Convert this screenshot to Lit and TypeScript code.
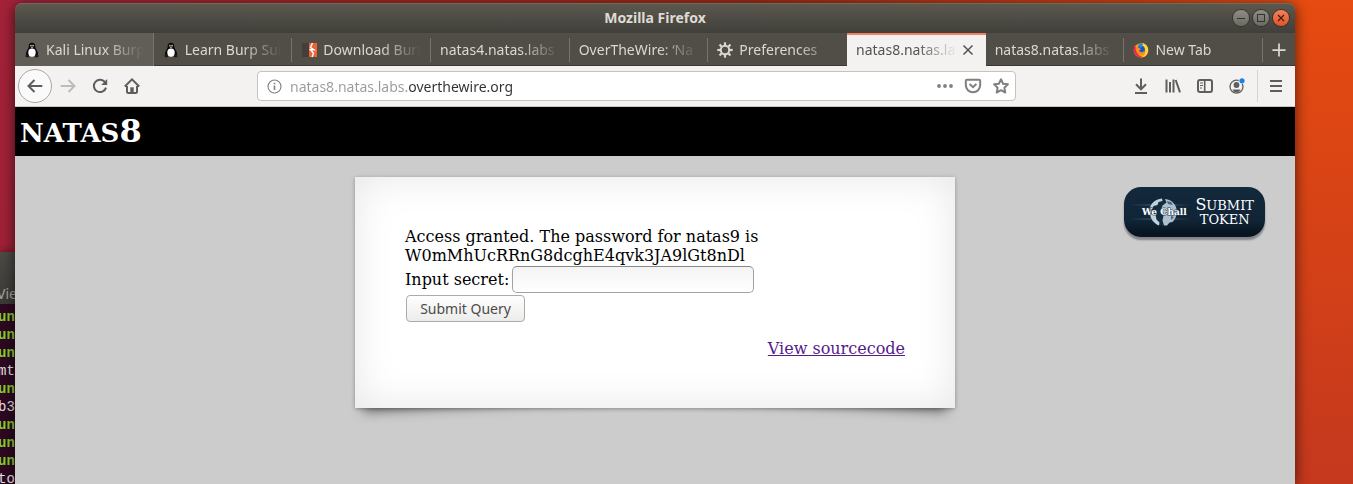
import { LitElement, html, css, svg, nothing, TemplateResult } from "lit";
import { customElement, property, state } from "lit/decorators.js";

type Tab = { title: string; icon?: "tux" | "burp" | "gear" | "fox"; hover?: boolean };

const TABS: Tab[] = [
  { title: "Kali Linux Burp", icon: "tux", hover: true },
  { title: "Learn Burp Suite", icon: "tux" },
  { title: "Download Burp", icon: "burp" },
  { title: "natas4.natas.labs" },
  { title: "OverTheWire: ‘Na" },
  { title: "Preferences", icon: "gear" },
  { title: "natas8.natas.labs" },
  { title: "natas8.natas.labs" },
  { title: "New Tab", icon: "fox" },
];

const spokes = [0, 45, 90, 135, 180, 225, 270, 315];

const ICONS: Record<string, TemplateResult> = {
  tux: svg`
    <path d="M8 .8C5.700.8 4.600 2.300 4.700 4.300c.1 1.700-.6 2.400-1.700 4.200C2 10.200 1.600 12 2.300 13.600h11.400c.7-1.600.3-3.400-.7-5.100-1.100-1.800-1.800-2.500-1.700-4.200C11.400 2.300 10.300.8 8 .8z" fill="#0b0b0b"/>
    <ellipse cx="8" cy="10.600" rx="3.700" ry="4.200" fill="#fff"/>
    <ellipse cx="6.900" cy="3.600" rx=".7" ry=".9" fill="#ddd"/><ellipse cx="9.100" cy="3.600" rx=".7" ry=".9" fill="#ddd"/>
    <path d="M6.500 5 8 4.400 9.500 5 8 6.200z" fill="#c9a26a"/>
    <path d="M1.600 12.900c1.500-.9 3-.3 3.700 1.700-.7 1.200-2.600.9-3.700.2zM14.400 12.900c-1.500-.9-3-.3-3.700 1.700.7 1.200 2.600.9 3.700.2z" fill="#2a1710"/>`,
  burp: svg`
    <path d="M1 1h7v14H1z" fill="#453f3b"/><path d="M8 1h8v14H8z" fill="#ee6236"/>
    <path d="m11.500 1-2 4.500 3.500 2.300H9.500l3 3.400-1.500 3.800" stroke="#fff" stroke-width="1.400" fill="none"/>`,
  gear: svg`
    <circle cx="8" cy="8" r="4.200" fill="none" stroke="currentColor" stroke-width="2"/>
    ${spokes.map((a) => svg`<path d="M8 .3v3" stroke="currentColor" stroke-width="2.200" transform="rotate(${a} 8 8)"/>`)}`,
  fox: svg`
    <circle cx="8" cy="8.400" r="7.200" fill="#ff9a1a"/>
    <path d="M9.500.7c4 1.500 6.200 4.800 5.700 8.400-.5 3.700-3.500 6.500-7.200 6.500 3.500-2 5-4.400 4.300-7.600C11.700 5.200 9.400 3.900 9.500.7z" fill="#ffd73a"/>
    <path d="M1.500 3.200C.2 6.300.3 10 2.600 12.700c2 2.400 5.100 3.300 8 2.300-4.700-.4-7-3.300-6.600-7.800z" fill="#f0244f"/>
    <circle cx="8" cy="7.600" r="3.900" fill="#1757c2"/><path d="M5 3.200c1.300-1.500 3.300-2 5-1.500C8.700 3 9 4.200 9.700 5L7 6z" fill="#1b8be0"/>
    <path d="M3.200 4.300 6.500 6.200c1.300.2 1.700 1 .6 1.600-1 .6-1.200 1.300 0 2 1.500.8 3.400.2 4.400-1-.3 3-3.200 4.300-5.600 3.200-2.700-1.300-4-4.600-2.700-7.700z" fill="#ff8a1f"/>`,
  back: svg`<path d="M15.300 8H1.500M7.500 2 1.500 8l6 6" class="s2"/>`,
  forward: svg`<path d="M.7 8h13.800M8.500 2l6 6-6 6" class="s2"/>`,
  reload: svg`<path d="M13.300 4.600A6.200 6.200 0 1 0 14 9.600" class="s2"/><path d="M15.200 1v6H9.200z" fill="currentColor"/>`,
  home: svg`<path d="M.8 8.500 8 1.400l7.200 7.100" class="s2"/><path d="M3 8v5.800c0 .7.400 1.200 1.200 1.200h7.600c.8 0 1.200-.5 1.200-1.200V8" class="s2"/><path d="M6.300 15V9.300h3.400V15z" fill="currentColor"/>`,
  info: svg`<circle cx="8" cy="8" r="6.900" fill="none" stroke="currentColor" stroke-width="1.200"/><path d="M8 7v4.700M8 4v1.700" stroke="currentColor" stroke-width="1.700"/>`,
  dots: svg`<g fill="currentColor"><circle cx="2" cy="8" r="1.900"/><circle cx="8" cy="8" r="1.900"/><circle cx="14" cy="8" r="1.900"/></g>`,
  pocket: svg`<path d="M2 1.700h12c.7 0 1.200.5 1.200 1.200v4.200a7.200 7.200 0 0 1-14.400 0V2.900c0-.7.500-1.200 1.200-1.200z" class="s2"/><path d="M4.600 6 8 9.200 11.400 6" class="s2"/>`,
  star: svg`<path d="m8 1.300 2.100 4.400 4.800.6-3.500 3.400.9 4.800L8 12.200l-4.300 2.300.9-4.800L1.100 6.300l4.800-.6z" class="s2" stroke-linejoin="round"/>`,
  download: svg`<path d="M8 .5v10.500M3 6.300l5 5 5-5M2 15h12" class="s2"/>`,
  library: svg`<path d="M1.500 1.500v13M5 4v10.500M8.500 1.500v13M10.700 2l4.300 12.300" class="s2"/>`,
  sidebar: svg`<rect x="1" y="2" width="14" height="12" rx="2" class="s2"/><path d="M7.700 2v12" stroke="currentColor" stroke-width="1.600"/><path d="M3 5h3M3 7.500h3M3 10h2" stroke="currentColor"/>`,
  account: svg`<circle cx="7.500" cy="8.700" r="6.500" fill="none" stroke="currentColor" stroke-width="1.300"/><circle cx="7.500" cy="7" r="2.900" fill="currentColor"/><path d="M3.400 11.500h8.200c-1 2-2.500 2.900-4.100 2.900s-3.100-.9-4.100-2.900z" fill="currentColor"/><circle cx="13" cy="2.800" r="3.300" fill="#f4f2f1"/><circle cx="13" cy="2.800" r="2.600" fill="#1a80ea"/>`,
  menu: svg`<path d="M2 3h12M2 8h12M2 13h12" class="s2"/>`,
  close: svg`<path d="m2 2 12 12M14 2 2 14" class="s2"/>`,
  plus: svg`<path d="M8 .5v15M.5 8h15" class="s2"/>`,
  minimize: svg`<path d="M4 8.500h8" stroke="#34332e"/>`,
  maximize: svg`<rect x="4.500" y="4.500" width="7" height="7" fill="none" stroke="#34332e"/>`,
  shut: svg`<path d="m5 5 6 6M11 5l-6 6" stroke="#3a1d10" stroke-width="1.200"/>`,
};

@customElement("ui-icon")
class UiIcon extends LitElement {
  @property() name = "";
  static styles = css`
    :host { display: block; flex: none; width: 16px; height: 16px; }
    svg { display: block; width: 100%; height: 100%; overflow: visible; }
    .s2 { fill: none; stroke: currentColor; stroke-width: 2; }
  `;
  render() {
    return html`<svg viewBox="0 0 16 16" aria-hidden="true">${ICONS[this.name]}</svg>`;
  }
}

@customElement("terminal-window")
class TerminalWindow extends LitElement {
  static styles = css`
    :host { display: flex; flex-direction: column; overflow: hidden; background: #2d0922; box-shadow: 0 0 8px rgba(0, 0, 0, 0.5); }
    .bar { height: 52px; flex: none; display: flex; align-items: flex-end; background: linear-gradient(#4b4a45, #3b3a36); color: #aaa69d; font: 14px/20px "Noto Sans", sans-serif; }
    .bar span { margin-left: -3px; }
    .lines { padding-top: 4px; margin-left: -2px; font: 14px/18px "Liberation Mono", monospace; color: #e8e4e6; }
    .prompt { color: #87d42c; font-weight: bold; }
  `;
  render() {
    const lines = ["un", "un", "un", "mt", "un", "b3", "un", "un", "un", "to"];
    return html`
      <div class="bar"><span>Vie</span></div>
      <div class="lines">
        ${lines.map((l) => html`<div class=${l === "un" ? "prompt" : "out"}>${l}</div>`)}
      </div>`;
  }
}

@customElement("tab-strip")
class TabStrip extends LitElement {
  @state() active = 6;
  static styles = css`
    :host { display: flex; height: 33px; background: #514e47; color: #dcd8cf; box-shadow: inset 0 -1px #3a3935; }
    .tab { position: relative; display: flex; align-items: center; flex: 1 1 0; min-width: 0; }
    .tab::after { content: ""; align-self: center; width: 1px; height: 24px; background: #77746c; }
    .tab.hover { background: #615e58; }
    .tab.hover::after { height: 100%; }
    .tab.quiet::after { background: transparent; }
    .tab.active { background: #f4f2f1; color: #55534f; box-shadow: inset 0 2px #ee8261; }
    .tab.active::after { display: none; }
    button { font: inherit; color: inherit; background: none; border: 0; padding: 0; }
    .pick { display: flex; align-items: center; gap: 6px; flex: 1; min-width: 0; height: 100%; padding: 0 9px; text-align: left; }
    .label { flex: 1; min-width: 0; overflow: hidden; white-space: nowrap; line-height: 20px; mask-image: linear-gradient(to left, transparent, #000 40px); }
    .close { display: grid; place-items: center; width: 20px; height: 20px; margin-right: 8px; }
    .active .pick { padding-right: 1px; }
    .close ui-icon { width: 12px; height: 12px; }
    .new { width: 32px; display: grid; place-items: center; }
    .new ui-icon { width: 14px; height: 14px; }
  `;
  render() {
    return html`
      ${TABS.map((t, i) => {
        const on = i === this.active;
        const cls = `tab ${on ? "active" : ""} ${t.hover ? "hover" : ""} ${i === this.active - 1 ? "quiet" : ""}`;
        return html`<div class=${cls}>
          <button class="pick" aria-pressed=${on} @click=${() => (this.active = i)}>
            ${t.icon ? html`<ui-icon name=${t.icon}></ui-icon>` : nothing}
            <span class="label">${t.title}</span>
          </button>
          ${on ? html`<button class="close" aria-label="Close tab"><ui-icon name="close"></ui-icon></button>` : nothing}
        </div>`;
      })}
      <button class="new" aria-label="Open a new tab"><ui-icon name="plus"></ui-icon></button>`;
  }
}

@customElement("nav-bar")
class NavBar extends LitElement {
  static styles = css`
    :host { display: flex; align-items: center; height: 41px; padding: 0 3px; box-sizing: border-box; background: #f4f2f1; color: #5f5e5b; border-bottom: 1px solid #c9c6c3; }
    button { display: grid; place-items: center; width: 32px; height: 32px; padding: 0; border: 0; background: none; color: inherit; }
    .back { width: 34px; height: 34px; border: 1px solid #aaa7a4; border-radius: 50%; background: #fbfafa; }
    .forward { color: #bebcba; }
    .url { display: flex; align-items: center; flex: 1; min-width: 0; height: 30px; margin: 0 109px; box-sizing: border-box; border: 1px solid #c5c2bf; border-radius: 4px; background: #fff; color: #82807e; }
    .url button { width: 28px; height: 28px; }
    .url .info { width: 32px; }
    .url .info ui-icon { width: 15px; height: 15px; }
    input {
      flex: 1; min-width: 0; height: 28px; padding: 0; border: 0; outline: 0; font: inherit;
      -webkit-text-fill-color: transparent; color: #33322f; caret-color: #33322f;
      background: linear-gradient(to right, #9c9a98 119px, #33322f 119px); background-clip: text; -webkit-background-clip: text;
    }
    .sep { width: 1px; height: 32px; background: #d5d2d0; margin: 0 2px 0 4px; }
  `;
  render() {
    const b = (name: string, label: string) =>
      html`<button class=${name} aria-label=${label}><ui-icon name=${name}></ui-icon></button>`;
    return html`
      ${b("back", "Back")}${b("forward", "Forward")}${b("reload", "Reload")}${b("home", "Home")}
      <div class="url">
        ${b("info", "Site information")}
        <input type="text" aria-label="Address" spellcheck="false" value="natas8.natas.labs.overthewire.org" />
        ${b("dots", "Page actions")}${b("pocket", "Save to Pocket")}${b("star", "Bookmark")}
      </div>
      ${b("download", "Downloads")}${b("library", "Library")}${b("sidebar", "Sidebars")}${b("account", "Account")}
      <span class="sep"></span>
      ${b("menu", "Menu")}`;
  }
}

@customElement("natas-page")
class NatasPage extends LitElement {
  static styles = css`
    :host { display: block; flex: 1; background: #ccc; color: #000; font: 16px/19px "DejaVu Serif", serif; }
    h1 { margin: 0; padding: 6px 5px; background: #000; color: #fff; font-size: 32px; line-height: 37px; }
    .caps { font-size: 26px; line-height: 26px; text-transform: uppercase; }
    .body { display: grid; grid-template-columns: 1fr minmax(0, 600px) 1fr; align-items: start; padding-top: 21px; }
    .card { grid-column: 2; position: relative; z-index: 0; }
    .card::before, .card::after {
      content: ""; position: absolute; z-index: -1; bottom: 12px; left: 12px; width: 50%; height: 20%;
      box-shadow: 0 8px 12px rgba(0, 0, 0, 0.5); transform: skew(-8deg) rotate(-3deg);
    }
    .card::after { left: auto; right: 12px; transform: skew(8deg) rotate(3deg); }
    .paper { padding: 50px; background: #fff; box-shadow: 0 1px 4px rgba(0, 0, 0, 0.3), inset 0 0 40px rgba(0, 0, 0, 0.1); }
    p { margin: 0; }
    .field { display: flex; align-items: center; gap: 3px; padding-top: 1px; }
    input { width: 242px; height: 27px; box-sizing: border-box; padding: 0 8px; font: inherit; border: 1px solid #a5a3a1; border-top-color: #8a8886; border-radius: 5px; background: linear-gradient(#f4f4f4, #fff); }
    .submit { display: block; height: 27px; width: 119px; margin: 2px 1px 0; padding: 0; border: 1px solid #adaaa7; border-radius: 4px; background: linear-gradient(#fefefe, #ececeb); color: #4c4b48; font: 14px/20px "Noto Sans", sans-serif; }
    .source { display: block; width: fit-content; margin: 17px 0 0 auto; color: #551a8b; }
    .token { grid-column: 3; justify-self: end; display: flex; align-items: center; justify-content: space-between; box-sizing: border-box; width: 141px; height: 50px; margin: 10px 30px 0 0; padding: 0 11px 0 17px; border-radius: 17px; background: linear-gradient(#13293c, #102436 34px, #081521 46px); box-shadow: 0 3px 2px #808388; color: #fff; text-decoration: none; }
    .token svg { display: block; width: 48px; height: 34px; overflow: visible; }
    .mark { font: bold 9px "DejaVu Serif", serif; fill: #fff; stroke: #20384c; stroke-width: 1px; paint-order: stroke; }
    .cta { display: flex; flex-direction: column; align-items: center; font-size: 13px; line-height: 14px; text-transform: uppercase; }
    .initial { font-size: 16px; }
  `;
  render() {
    return html`
      <h1><span class="caps">natas</span>8</h1>
      <div class="body">
        <main class="card">
          <div class="paper">
            <p>Access granted. The password for natas9 is<br />W0mMhUcRRnG8dcghE4qvk3JA9lGt8nDl</p>
            <form @submit=${(e: Event) => e.preventDefault()}>
              <div class="field">
                <label for="secret">Input secret:</label>
                <input id="secret" name="secret" type="text" />
              </div>
              <button class="submit" type="submit">Submit Query</button>
            </form>
            <a class="source" href="#source">View sourcecode</a>
          </div>
        </main>
        <a class="token" href="#token">
          <svg viewBox="0 0 48 34" aria-label="WeChall">
            <defs><linearGradient id="streak"><stop offset="0" stop-color="#5b7286" stop-opacity="0" /><stop offset=".5" stop-color="#5b7286" /><stop offset="1" stop-color="#5b7286" stop-opacity="0" /></linearGradient></defs>
            <path d="M-12 9.500h62v1h-62zM-12 23.500h62v1h-62z" fill="url(#streak)" />
            <circle cx="22" cy="17" r="13.500" fill="#142c40" />
            <path d="M21 3.500C14 4 9 9 8.500 15l3-1 1-3 4-1 1-3 4-1zM9 19c.5 5 4 9.500 9 11.500l.5-3-3-3-1-5z" fill="#c4d0dc" />
            <path d="M24 4c7 .5 12 6 12 13.500-.5 4-2 7-4.500 9.500l-3 .5-2.500 3h-3l-1.500-5 1-5-3-4 2-6 4-3z" fill="#aebfce" />
            <path d="m26 6 4 1 2 3-5-1zM30 21l3 1-3 3z" fill="#4d6478" />
            <text class="mark" x="1" y="20">We Chall</text>
          </svg>
          <span class="cta"><span><span class="initial">S</span>ubmit</span><span>token</span></span>
        </a>
      </div>`;
  }
}

@customElement("app-root")
class AppRoot extends LitElement {
  static styles = css`
    :host {
      display: flex; position: relative; min-height: 100vh; box-sizing: border-box; overflow: hidden; padding: 3px 58px 0 15px;
      background: linear-gradient(to bottom, transparent, rgba(150, 30, 50, 0.42)), linear-gradient(to right, #a32239, #a5261f 30%, #9e2c18 55%, #e64b10 96%);
      font: 14px/20px "Noto Sans", "Open Sans", sans-serif;
    }
    terminal-window { position: absolute; left: 0; top: 252px; bottom: 0; width: 15px; }
    .browser { position: relative; display: flex; flex-direction: column; flex: 1; min-width: 0; border-radius: 7px 7px 0 0; box-shadow: 0 2px 14px rgba(0, 0, 0, 0.65); }
    .title { display: flex; align-items: center; height: 30px; padding: 0 6px; border-radius: 7px 7px 0 0; background: linear-gradient(#5c594f, #403f3a); box-shadow: inset 0 1px #6d6a61; color: #dfdbd2; }
    .title h2 { flex: 1; margin: 0; padding-left: 60px; font-size: 14px; line-height: 20px; text-align: center; }
    .ctl { display: grid; place-items: center; width: 16px; height: 16px; margin-left: 4px; padding: 0; border: 0; border-radius: 50%; background: linear-gradient(#8f8d84, #6b6962); box-shadow: 0 0 0 1px #35342f; }
    .ctl.shut { background: linear-gradient(#f58158, #e2522a); }
    @media (max-width: 700px) { :host { padding: 3px 0 0; } terminal-window { display: none; } }
  `;
  render() {
    const ctl = (name: string, label: string) =>
      html`<button class="ctl ${name}" aria-label=${label}><ui-icon name=${name}></ui-icon></button>`;
    return html`
      <terminal-window></terminal-window>
      <section class="browser">
        <header class="title">
          <h2>Mozilla Firefox</h2>
          ${ctl("minimize", "Minimize")}${ctl("maximize", "Maximize")}${ctl("shut", "Close")}
        </header>
        <tab-strip></tab-strip>
        <nav-bar></nav-bar>
        <natas-page></natas-page>
      </section>`;
  }
}
